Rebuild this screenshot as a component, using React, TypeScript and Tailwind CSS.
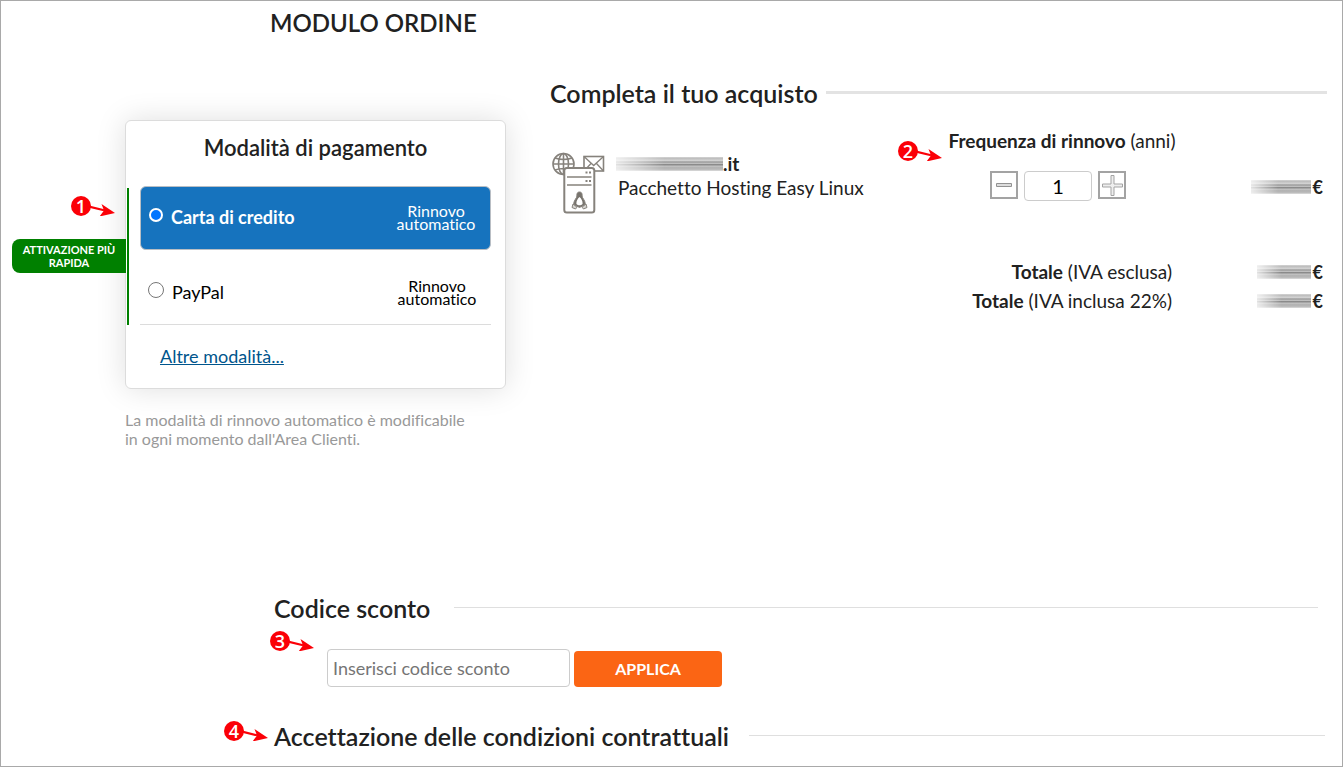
import { useState } from "react";

function Marker({ n, className }: { n: number; className: string }) {
  return (
    <span className={`pointer-events-none absolute flex items-center ${className}`}>
      <span className="flex size-5 items-center justify-center rounded-full bg-[#fb0007] font-['Open_Sans',sans-serif] text-lg leading-5 font-semibold text-white">
        {n}
      </span>
      <svg width="26" height="20" viewBox="0 0 26 20" className="-ml-0.5" aria-hidden="true">
        <path d="M0 10.500 L15 14.300" stroke="#fb0007" strokeWidth="2.200" />
        <path d="M12.500 8 L26 17 L10.500 20.500 L15 14.500 Z" fill="#fb0007" />
      </svg>
    </span>
  );
}

function Redacted({ className }: { className: string }) {
  return (
    <span
      aria-hidden="true"
      className={`inline-block h-3.5 bg-[linear-gradient(180deg,#d4d4d4_0%,#bcbcbc_12%,#d6d6d6_24%,#999999_36%,#c2c2c2_46%,#808080_55%,#c4c4c4_65%,#b2b2b2_76%,#b8b8b8_88%,#dddddd_100%)] [mask-image:linear-gradient(90deg,rgba(0,0,0,0.25),#000_45%,#000)] ${className}`}
    />
  );
}

function HostingIcon() {
  return (
    <svg width="54" height="62" viewBox="0 0 54 62" fill="none" stroke="#86827c" strokeWidth="1.600" className="shrink-0" aria-hidden="true">
      <circle cx="11.500" cy="12" r="10.500" />
      <ellipse cx="11.500" cy="12" rx="5" ry="10.500" />
      <path d="M11.500 1.500v21M1 12h21M3 6q8.500 3 17 0M3 18q8.500-3 17 0" />
      <rect x="32" y="4.500" width="19.500" height="14.500" fill="#fff" />
      <path d="M32 4.500l9.700 9 9.800-9M32 19l7-7.500M51.500 19l-7-7.500" strokeWidth="1.300" />
      <rect x="12.300" y="16" width="30" height="44.500" rx="2.500" fill="#fff" strokeWidth="2" />
      <path d="M15 25h24.500M15 33h24.500" />
      <path d="M33.500 20.500h2M37 20.500h2M33.500 29h2M37 29h2" strokeWidth="2" />
      <path d="M27.500 40c-2.200 0-2.800 1.500-2.600 4 .1 2-3.400 4.500-3.200 8.500l5.800 3 5.800-3c.2-4-3.300-6.500-3.200-8.500.2-2.500-.4-4-2.600-4z" fill="#77736d" strokeWidth="1" />
      <path d="M27.500 45c-1.800 1.500-3.300 4-3.100 7 1.500 1.800 4.700 1.800 6.200 0 .2-3-1.300-5.500-3.100-7z" fill="#fff" stroke="none" />
      <path d="M21 52l4 3.200-1.500 1.800-3.500-1.500zM34 52l-4 3.200 1.500 1.800 3.500-1.500z" fill="#d8d6d2" strokeWidth="1" />
    </svg>
  );
}

function SectionTitle({ children, line }: { children: string; line: string }) {
  return (
    <div className="flex items-center">
      <h2 className="text-[25px] leading-8 font-semibold whitespace-nowrap">{children}</h2>
      <span className={`mb-0.5 flex-1 ${line}`} />
    </div>
  );
}

const options = [
  { id: "card", label: "Carta di credito" },
  { id: "paypal", label: "PayPal" },
];

function PaymentCard() {
  const [method, setMethod] = useState("card");
  return (
    <section className="relative rounded-md border border-[#dcdcdc] bg-white px-3.5 shadow-[0_0_30px_rgba(0,0,0,0.13)]">
      <h2 className="pt-3 pb-[23px] text-center text-[22px] leading-[30px] font-semibold">Modalità di pagamento</h2>
      <div className="absolute top-[67px] left-px h-[137px] w-0.5 bg-[#008000]" />
      <div className="absolute top-[118px] right-full w-[114px] rounded-l-lg bg-[#008000] py-1 text-center text-[11px] leading-[13px] font-bold text-white">
        ATTIVAZIONE PIÙ RAPIDA
      </div>
      <Marker n={1} className="top-[75px] -left-[55px]" />
      {options.map((o) => {
        const on = method === o.id;
        return (
          <label
            key={o.id}
            className={
              on
                ? "flex h-16 items-center rounded-md border border-[#b9bec4] bg-[#1673be] px-2 pb-0.5 font-bold text-white"
                : "flex h-[75px] items-center border-b border-[#dcdcdc] px-2 pt-2.5 text-black"
            }
          >
            <input
              type="radio"
              name="metodo"
              checked={on}
              onChange={() => setMethod(o.id)}
              className={
                on
                  ? "mb-1 size-3.5 appearance-none rounded-full border-2 border-white bg-[#0075ff]"
                  : "mb-1 size-4 appearance-none rounded-full border border-[#767676] bg-white"
              }
            />
            <span className="ml-2 flex-1 text-lg">{o.label}</span>
            <span className="w-[92px] text-center text-base leading-[13px] font-normal">Rinnovo automatico</span>
          </label>
        );
      })}
      <a href="#altre" className="my-[18px] ml-5 inline-block text-lg leading-[27px] text-[#00558c] underline">
        Altre modalità...
      </a>
    </section>
  );
}

function Price({ width }: { width: string }) {
  return (
    <span className="flex items-center justify-end gap-0.5 text-lg leading-7 font-bold">
      <Redacted className={width} />€
    </span>
  );
}

export default function App() {
  const [years, setYears] = useState("1");
  const step = (d: number) => setYears(String(Math.max(1, Number(years) + d)));
  const stepButton = "flex size-7 items-center justify-center border-2 border-[#a3a3a3] bg-white";

  return (
    <main className="min-h-screen border border-[#a9a9a9] bg-white font-[Lato,sans-serif] text-[#212121] [font-variant-ligatures:none]">
      <h1 className="pt-1 pl-[269px] text-2xl leading-9 font-semibold">MODULO ORDINE</h1>

      <div className="flex gap-11 pt-9 pr-[15px] pl-[124px]">
        <div className="w-[381px] shrink-0 pt-[43px]">
          <PaymentCard />
          <p className="pt-[21px] text-base leading-[19px] text-[#999]">
            La modalità di rinnovo automatico è modificabile
            <br />
            in ogni momento dall'Area Clienti.
          </p>
        </div>

        <section className="flex-1">
          <SectionTitle line="ml-2 h-[3px] bg-[#e3e3e3]">Completa il tuo acquisto</SectionTitle>
          <div className="flex pt-5 pr-1">
            <div className="flex flex-1 gap-3 pt-[23px] pl-0.5">
              <HostingIcon />
              <div>
                <div className="-ml-0.5 flex h-6 items-center text-[19px] font-bold">
                  <Redacted className="w-[107px]" />.it
                </div>
                <div className="text-[19px] leading-6">Pacchetto Hosting Easy Linux</div>
              </div>
            </div>
            <div className="relative w-[228px] shrink-0">
              <Marker n={2} className="top-3 -left-[50px]" />
              <div className="text-center text-[19px] leading-6 whitespace-nowrap">
                <b>Frequenza di rinnovo</b> (anni)
              </div>
              <div className="flex justify-center gap-1.5 pt-[18px] pr-2">
                <button type="button" aria-label="Diminuisci" onClick={() => step(-1)} className={stepButton}>
                  <svg width="16" height="4" viewBox="0 0 16 4" fill="#ddd" stroke="#929292">
                    <path d="M.5.5h15v3H.5z" />
                  </svg>
                </button>
                <input
                  aria-label="Anni"
                  value={years}
                  onChange={(e) => setYears(e.target.value)}
                  className="h-[30px] w-[68px] rounded border border-[#ccc] text-center text-xl text-black"
                />
                <button type="button" aria-label="Aumenta" onClick={() => step(1)} className={stepButton}>
                  <svg width="21" height="21" viewBox="0 0 21 21" className="shrink-0" fill="#eee" stroke="#a3a3a3">
                    <path d="M9 .5h3V9h8.500v3H12v8.500H9V12H.5V9H9z" />
                  </svg>
                </button>
              </div>
            </div>
            <div className="w-[147px] shrink-0 pt-11">
              <Price width="w-[60px]" />
            </div>
          </div>
          <div className="flex flex-col gap-px pt-11 pr-1 text-[19px] leading-7">
            <div className="flex items-center justify-end">
              <span><b>Totale</b> (IVA esclusa)</span>
              <div className="w-[151px]"><Price width="w-[54px]" /></div>
            </div>
            <div className="flex items-center justify-end">
              <span><b>Totale</b> (IVA inclusa 22%)</span>
              <div className="w-[151px]"><Price width="w-[54px]" /></div>
            </div>
          </div>
        </section>
      </div>

      <section className="pt-[144px] pr-6 pl-[273px]">
        <SectionTitle line="ml-6 h-px bg-[#dfdfdf]">Codice sconto</SectionTitle>
        <form className="relative flex items-end gap-1 pt-[25px] pl-[53px]" onSubmit={(e) => e.preventDefault()}>
          <Marker n={3} className="top-[7px] -left-1" />
          <input
            aria-label="Codice sconto"
            placeholder="Inserisci codice sconto"
            className="h-[38px] w-[243px] rounded border border-[#ccc] px-[5px] text-lg placeholder:text-[#757575]"
          />
          <button type="submit" className="h-9 w-[148px] rounded bg-[#fb6514] text-base font-bold text-white">
            APPLICA
          </button>
        </form>
      </section>

      <section className="relative pt-[33px] pr-[17px] pb-3.5 pl-[273px]">
        <Marker n={4} className="top-[34px] left-[223px]" />
        <SectionTitle line="ml-5 h-px bg-[#dfdfdf]">Accettazione delle condizioni contrattuali</SectionTitle>
      </section>
    </main>
  );
}
